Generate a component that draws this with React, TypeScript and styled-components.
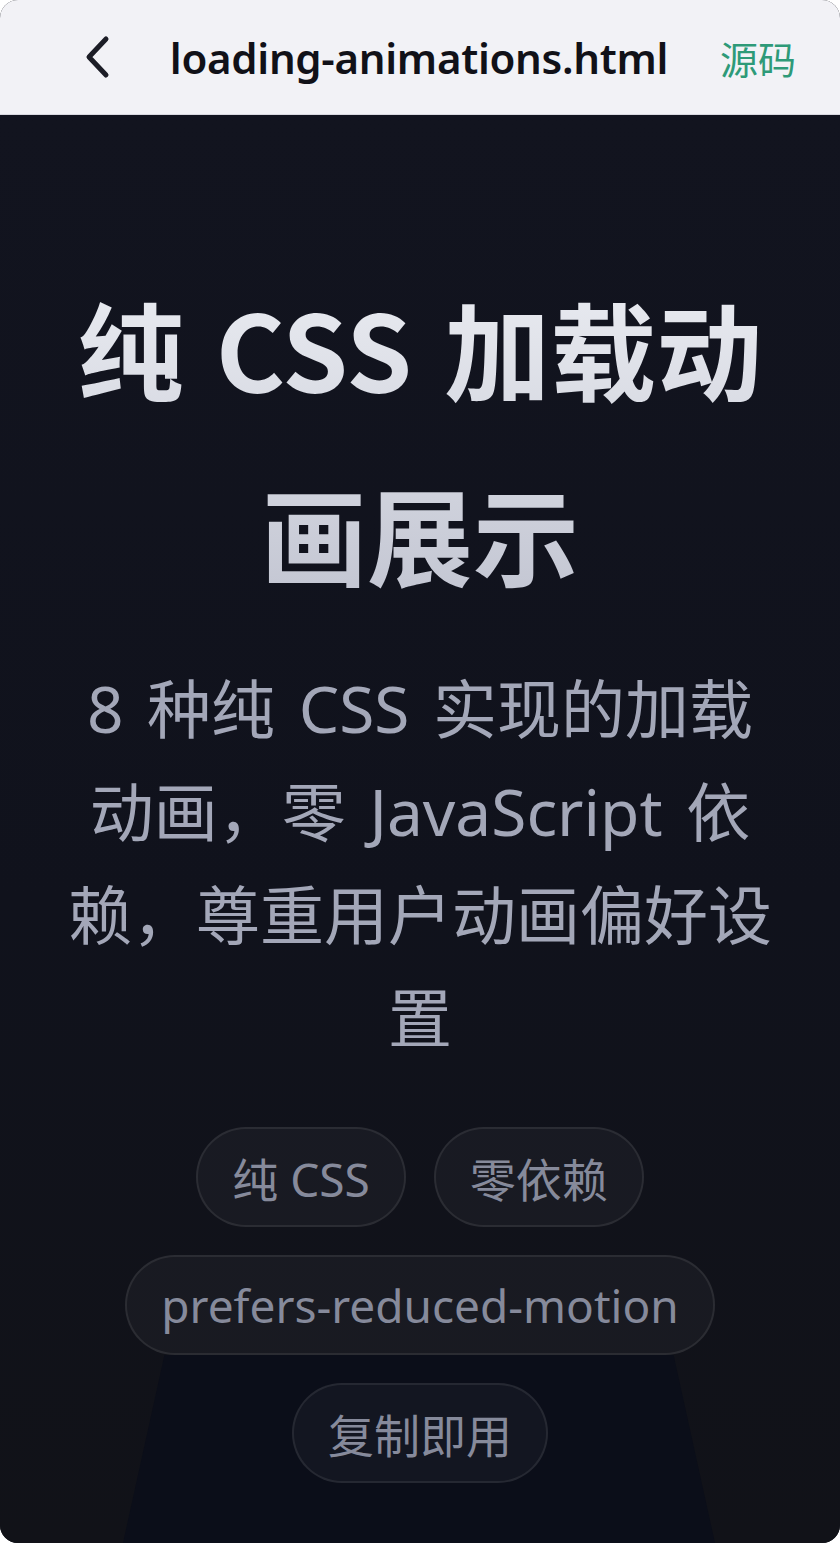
import React from 'react'
import styled, { createGlobalStyle } from 'styled-components'

const GlobalStyle = createGlobalStyle`
  html, body {
    margin: 0;
    padding: 0;
    background: #ffffff;
  }
  * {
    box-sizing: border-box;
  }
`

const tags: string[] = ['纯 CSS', '零依赖', 'prefers-reduced-motion', '复制即用']

const App = () => {
  return (
    <>
      <GlobalStyle />
      <Frame>
        <Header>
          <BackButton aria-label="返回">
            <svg width="30" height="44" viewBox="0 0 30 44" fill="none">
              <path
                d="M23 4 L6 22 L23 40"
                stroke="#1c1d26"
                strokeWidth="5"
                strokeLinecap="round"
                strokeLinejoin="round"
              />
            </svg>
          </BackButton>
          <HeaderTitle>loading-animations.html</HeaderTitle>
          <SourceLink>源码</SourceLink>
        </Header>
        <Hero>
          <Spotlight />
          <HeroTitle>纯 CSS 加载动画展示</HeroTitle>
          <HeroSubtitle>
            8 种纯 CSS 实现的加载动画，零 JavaScript 依赖，尊重用户动画偏好设置
          </HeroSubtitle>
          <TagList>
            {tags.map((t) => (
              <Tag key={t}>{t}</Tag>
            ))}
          </TagList>
        </Hero>
      </Frame>
    </>
  )
}

const Frame = styled.div`
  width: 840px;
  height: 1543px;
  border-radius: 18px;
  overflow: hidden;
  display: flex;
  flex-direction: column;
  background: #0e1018;
  font-family: 'Noto Sans', 'Noto Sans CJK SC', sans-serif;
`

const Header = styled.div`
  height: 115px;
  flex-shrink: 0;
  background: #f2f2f6;
  border-bottom: 1px solid #d8d8e0;
  display: flex;
  align-items: center;
  padding: 0 44px 0 78px;
`

const BackButton = styled.div`
  width: 40px;
  display: flex;
  align-items: center;
  justify-content: center;
`

const HeaderTitle = styled.div`
  flex: 1;
  text-align: center;
  font-family: 'Noto Sans', 'Noto Sans CJK SC', sans-serif;
  font-weight: 600;
  font-size: 42px;
  letter-spacing: -0.3px;
  color: #111118;
`

const SourceLink = styled.div`
  font-family: 'Noto Sans CJK SC', sans-serif;
  font-size: 38px;
  font-weight: 400;
  color: #2e9a78;
`

const Hero = styled.div`
  position: relative;
  flex: 1;
  display: flex;
  flex-direction: column;
  align-items: center;
  padding: 140px 60px 0;
  background: linear-gradient(180deg, #12141f 0%, #10121c 55%, #111218 100%);
`

const Spotlight = styled.div`
  position: absolute;
  left: 123px;
  right: 125px;
  bottom: 0;
  height: 188px;
  background: #0b0e19;
  clip-path: polygon(7% 0, 93% 0, 100% 100%, 0 100%);
  pointer-events: none;
`

const HeroTitle = styled.h1`
  position: relative;
  margin: 0;
  width: 720px;
  text-align: center;
  font-family: 'Noto Sans CJK SC', sans-serif;
  font-weight: 700;
  font-size: 106px;
  line-height: 185px;
  word-spacing: 8px;
  background: linear-gradient(180deg, #eceef3 0%, #c0c3d0 100%);
  -webkit-background-clip: text;
  background-clip: text;
  color: transparent;
`

const HeroSubtitle = styled.p`
  position: relative;
  margin: 32px 0 0;
  width: 712px;
  text-align: center;
  font-family: 'Noto Sans', 'Noto Sans CJK SC', sans-serif;
  font-weight: 400;
  font-size: 64px;
  line-height: 103px;
  word-spacing: 7px;
  color: #a3a7b8;
`

const TagList = styled.div`
  position: relative;
  margin-top: 58px;
  width: 720px;
  display: flex;
  flex-wrap: wrap;
  justify-content: center;
  gap: 28px;
`

const Tag = styled.span`
  height: 100px;
  padding: 0 34px;
  display: inline-flex;
  align-items: center;
  border-radius: 50px;
  border: 2px solid rgba(255, 255, 255, 0.08);
  background: rgba(255, 255, 255, 0.035);
  font-family: 'Noto Sans', 'Noto Sans CJK SC', sans-serif;
  font-size: 46px;
  color: #868a9b;
`

export default App
